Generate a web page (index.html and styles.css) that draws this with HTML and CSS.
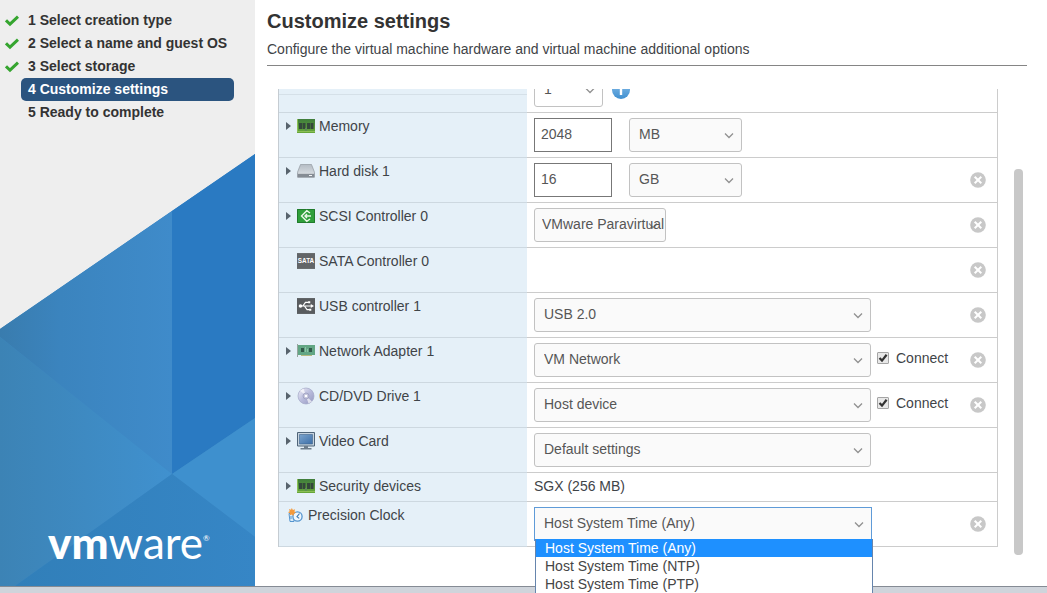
FILE: index.html
```html
<!DOCTYPE html>
<html lang="en">
<head>
<meta charset="utf-8">
<title>New virtual machine - Customize settings</title>
<link rel="stylesheet" href="styles.css">
</head>
<body>
<svg class="defs" width="0" height="0" aria-hidden="true">
  <defs>
    <linearGradient id="art-a"><stop offset="0" stop-color="#397cae"/><stop offset=".35" stop-color="#3b84be"/><stop offset="1" stop-color="#3f8bca"/></linearGradient>
    <linearGradient id="art-b"><stop offset="0" stop-color="#3c83b5"/><stop offset="1" stop-color="#4091cf"/></linearGradient>
    <linearGradient id="art-c"><stop offset="0" stop-color="#317fb9"/><stop offset="1" stop-color="#3686c6"/></linearGradient>
    <linearGradient id="ram-g" x2="0" y2="1"><stop offset="0" stop-color="#3f7d3c"/><stop offset="1" stop-color="#68a83a"/></linearGradient>
    <linearGradient id="disk-g" x2="0" y2="1"><stop offset="0" stop-color="#b4bcc4"/><stop offset="1" stop-color="#e2e6ea"/></linearGradient>
    <linearGradient id="info-g" x2="0" y2="1"><stop offset="0" stop-color="#8cc0ea"/><stop offset="1" stop-color="#3f8fd0"/></linearGradient>
    <linearGradient id="cd-g" x2="1" y2="1"><stop offset="0" stop-color="#f0f1f8"/><stop offset=".5" stop-color="#b9bbdc"/><stop offset="1" stop-color="#9296bd"/></linearGradient>
    <linearGradient id="screen-g" x2="1" y2="1"><stop offset="0" stop-color="#7ba4cd"/><stop offset="1" stop-color="#3c6ea8"/></linearGradient>
    <symbol id="check" viewBox="0 0 14 12"><path d="M1 5.300 5 9.200 13 1.600" fill="none" stroke="#35a52f" stroke-width="3"/></symbol>
    <symbol id="ram" viewBox="0 0 18 14"><path fill="url(#ram-g)" d="M0 0h18v14H0z"/><path fill="#8bbf55" d="M0 12h18v1H0zM0 0h1v13H0z"/><path fill="#33483a" d="M2 4h3v6H2zM5.500 4h3v6h-3zM10 4h3v6h-3zM13.500 4h3v6h-3z"/><path fill="#5c8a55" d="M8 9h2v3H8z"/></symbol>
    <symbol id="disk" viewBox="0 0 18 14"><path fill="url(#disk-g)" stroke="#9299a1" stroke-width=".7" d="M3.5.5h11L17.4 8v5.3H.6V8z"/><path fill="#858c94" d="M.6 9.300h16.800v4H.6z"/><path stroke="#c7ccd1" d="M1 9.500h16"/><path stroke="#f4f6f7" d="M12 11.500h3"/></symbol>
    <symbol id="scsi" viewBox="0 0 18 14"><path fill="#2f9f3b" d="M0 0h18v14H0z"/><path fill="none" stroke="#207a2c" d="M.5.5h17v13H.5z"/><path fill="none" stroke="#e9f7e7" stroke-width="1.4" d="M13 4 9.8 1.7 4.5 7l5.3 5.3L13 10M14 7H8M10 5 8 7l2 2"/></symbol>
    <symbol id="sata" viewBox="0 0 17 15"><path fill="#626568" d="M0 0h17v15H0z"/><text x="8.5" y="9.7" text-anchor="middle" font-family="Liberation Sans, sans-serif" font-size="6" font-weight="bold" fill="#fff">SATA</text></symbol>
    <symbol id="usb" viewBox="0 0 17 15"><path fill="#595c5f" d="M0 0h17v15H0z"/><path fill="none" stroke="#fff" stroke-width="1.1" d="M3 7.5h11M5.5 7.5 8 4h3M7 7.5l2.5 3.5H12"/><circle cx="3.3" cy="7.5" r="1.7" fill="#fff"/><path fill="#fff" d="m13 5.5 3 2-3 2zM10.5 3h2v2h-2zM11.5 10h2v2h-2z"/></symbol>
    <symbol id="nic" viewBox="0 0 18 14"><path fill="#62a684" d="M1 1h17v10H1z"/><path stroke="#98a59f" d="M.5 0v13"/><path fill="#31594a" d="M4 4h3v4H4zM12 4h3v4h-3z"/><path stroke="#8dc4a8" d="M8.5 3v5M10.500 5v3"/><path fill="#b6ba7e" d="M4 11h11v1H4z"/></symbol>
    <symbol id="cd" viewBox="0 0 18 18"><circle cx="9" cy="9" r="8" fill="url(#cd-g)" stroke="#a4a7c7" stroke-width=".7"/><path fill="#fff" opacity=".65" d="M9 9 3 3.500 6.500 1.500zM9 9l6 5.500-3.500 2z"/><circle cx="9" cy="9" r="3" fill="#c3c3dc" stroke="#8f92b3" stroke-width=".6"/><circle cx="9" cy="9" r="1.300" fill="#fff"/></symbol>
    <symbol id="screen" viewBox="0 0 18 18"><path fill="#c6d3df" stroke="#4f6478" d="M.5.5h17v13.500H.5z"/><path fill="url(#screen-g)" stroke="#41658b" stroke-width=".6" d="M2.500 2.500h13v9.500h-13z"/><path fill="#6c7c8b" d="M7 14h4v2H7zM3.500 16h11v1.500h-11z"/></symbol>
    <symbol id="clock" viewBox="0 0 15 15"><path fill="#d8eaf8" stroke="#5595cf" d="M1 5.500h5v8H2zM3 8v3"/><circle cx="9.500" cy="8.500" r="4.600" fill="#eff7fd" stroke="#5595cf" stroke-width="1.300"/><path fill="none" stroke="#3f7db9" stroke-width="1.200" d="M11.500 5.500 9 8.700l2.200 1.700"/><path fill="#f49a3c" d="m3.800 0 1.100 2 2.200-.7-.7 2.200 1.700 1.100-2 .9L5.300 8 3.800 6.500 1.800 7.300l.2-2-2-1 1.700-1.100L1 1.100l2 .6z"/></symbol>
    <symbol id="info" viewBox="0 0 18 18"><circle cx="9" cy="9" r="9" fill="url(#info-g)"/><path fill="#fff" d="M7.800 7.500h2.400V14H7.800zM7.800 4h2.400v2.200H7.800z"/></symbol>
    <symbol id="remove" viewBox="0 0 16 16"><circle cx="8" cy="8" r="7.800" fill="#c8c8c8"/><path stroke="#fff" stroke-width="2" d="m4.700 4.700 6.600 6.600M11.300 4.700l-6.600 6.600"/></symbol>
  </defs>
</svg>
<div class="wizard">
  <aside class="sidebar">
    <ol class="steps">
      <li><svg class="tick"><use href="#check"/></svg><span class="step">1 Select creation type</span></li>
      <li><svg class="tick"><use href="#check"/></svg><span class="step">2 Select a name and guest OS</span></li>
      <li><svg class="tick"><use href="#check"/></svg><span class="step">3 Select storage</span></li>
      <li><span class="step current" aria-current="step">4 Customize settings</span></li>
      <li><span class="step">5 Ready to complete</span></li>
    </ol>
    <div class="brand">
      <svg class="art" viewBox="0 0 255 432" preserveAspectRatio="none" aria-hidden="true">
        <path fill="#3b86c3" d="M0 175 255 0v432H0z"/>
        <path fill="url(#art-a)" d="M0 175 172 57v263L0 183z"/>
        <path fill="#2a7ac2" d="M172 57 255 0v264l-83 56z"/>
        <path fill="url(#art-b)" d="M0 183 172 320 15 432H0z"/>
        <path fill="#3e90ce" d="m172 320 83-56v119z"/>
        <path fill="url(#art-c)" d="m172 320 83 63v49H15z"/>
      </svg>
      <div class="logo"><b>vm</b>ware<sup>®</sup></div>
    </div>
  </aside>
  <main class="main">
    <header class="head">
      <h1>Customize settings</h1>
      <p>Configure the virtual machine hardware and virtual machine additional options</p>
    </header>
    <div class="scroller">
      <table class="hardware">
        <tbody>
          <tr class="cpu"><th scope="row"></th><td><div class="controls"><select class="tiny" aria-label="CPU"><option>1</option></select><svg class="info"><use href="#info"/></svg></div></td><td class="end"></td></tr>
          <tr><th scope="row"><div class="name"><i class="arrow"></i><svg class="icon"><use href="#ram"/></svg><label for="memory">Memory</label></div></th><td><div class="controls wide"><input class="number" id="memory" type="text" value="2048"><select class="unit" aria-label="Memory unit"><option>MB</option></select></div></td><td class="end"></td></tr>
          <tr><th scope="row"><div class="name"><i class="arrow"></i><svg class="icon"><use href="#disk"/></svg><label for="disk-size">Hard disk 1</label></div></th><td><div class="controls wide"><input class="number" id="disk-size" type="text" value="16"><select class="unit" aria-label="Disk unit"><option>GB</option></select></div></td><td class="end"><button class="remove" aria-label="Remove hard disk"><svg><use href="#remove"/></svg></button></td></tr>
          <tr><th scope="row"><div class="name"><i class="arrow"></i><svg class="icon"><use href="#scsi"/></svg><label for="scsi-type">SCSI Controller 0</label></div></th><td><div class="controls"><select class="type" id="scsi-type"><option>VMware Paravirtual</option></select></div></td><td class="end"><button class="remove" aria-label="Remove SCSI controller"><svg><use href="#remove"/></svg></button></td></tr>
          <tr><th scope="row"><div class="name"><i class="arrow none"></i><svg class="icon"><use href="#sata"/></svg>SATA Controller 0</div></th><td></td><td class="end"><button class="remove" aria-label="Remove SATA controller"><svg><use href="#remove"/></svg></button></td></tr>
          <tr><th scope="row"><div class="name"><i class="arrow none"></i><svg class="icon"><use href="#usb"/></svg><label for="usb-type">USB controller 1</label></div></th><td><div class="controls"><select id="usb-type"><option>USB 2.0</option></select></div></td><td class="end"><button class="remove" aria-label="Remove USB controller"><svg><use href="#remove"/></svg></button></td></tr>
          <tr><th scope="row"><div class="name"><i class="arrow"></i><svg class="icon"><use href="#nic"/></svg><label for="network">Network Adapter 1</label></div></th><td><div class="controls"><select id="network"><option>VM Network</option></select><label class="connect"><input type="checkbox" checked>Connect</label></div></td><td class="end"><button class="remove" aria-label="Remove network adapter"><svg><use href="#remove"/></svg></button></td></tr>
          <tr><th scope="row"><div class="name"><i class="arrow"></i><svg class="icon"><use href="#cd"/></svg><label for="drive">CD/DVD Drive 1</label></div></th><td><div class="controls"><select id="drive"><option>Host device</option></select><label class="connect"><input type="checkbox" checked>Connect</label></div></td><td class="end"><button class="remove" aria-label="Remove CD/DVD drive"><svg><use href="#remove"/></svg></button></td></tr>
          <tr><th scope="row"><div class="name"><i class="arrow"></i><svg class="icon"><use href="#screen"/></svg><label for="video">Video Card</label></div></th><td><div class="controls"><select id="video"><option>Default settings</option></select></div></td><td class="end"></td></tr>
          <tr class="short"><th scope="row"><div class="name"><i class="arrow"></i><svg class="icon"><use href="#ram"/></svg>Security devices</div></th><td>SGX (256 MB)</td><td class="end"></td></tr>
          <tr><th scope="row"><div class="name clock"><svg class="icon"><use href="#clock"/></svg><label for="precision">Precision Clock</label></div></th><td><div class="controls open"><select id="precision"><option>Host System Time (Any)</option></select>
            <ul class="menu" role="listbox"><li class="active" role="option">Host System Time (Any)</li><li role="option">Host System Time (NTP)</li><li role="option">Host System Time (PTP)</li></ul></div></td><td class="end"><button class="remove" aria-label="Remove precision clock"><svg><use href="#remove"/></svg></button></td></tr>
        </tbody>
      </table>
      <div class="track"><div class="thumb"></div></div>
    </div>
  </main>
</div>
</body>
</html>
```
FILE: styles.css
```css
* { box-sizing: border-box; }
body {
  margin: 0;
  font-family: "Liberation Sans", Arial, sans-serif;
  font-size: 14px;
  line-height: 18px;
  color: #3f4448;
  background: #cfd4db;
}
.defs { position: absolute; }
.wizard {
  display: grid;
  grid-template-columns: 255px 1fr;
  height: 100vh;
  overflow: hidden;
  padding-bottom: 7px;
}

/* Sidebar */
.sidebar {
  display: flex;
  flex-direction: column;
  justify-content: space-between;
  background: #eee;
  border-bottom: 1px solid #858b94;
  margin-bottom: -1px;
}
.steps {
  list-style: none;
  margin: 0;
  padding: 9px 21px 0 5px;
  font-weight: bold;
  color: #333;
}
.steps li { display: flex; align-items: center; height: 23px; }
.tick { width: 14px; height: 12px; margin-right: 2px; }
.step { flex: 1; line-height: 23px; padding-left: 7px; white-space: nowrap; }
.steps li > .step:first-child { margin-left: 16px; }
.current { background: #2b547f; color: #fff; border-radius: 5px; }
.brand { position: relative; }
.art { display: block; width: 100%; height: 432px; }
.logo {
  position: absolute;
  left: 48px;
  bottom: 18px;
  font: 400 44px/52px Lato, sans-serif;
  color: #fff;
  white-space: nowrap;
}
.logo b { font-weight: 900; }
.logo sup { font-size: 8px; line-height: 8px; vertical-align: 18px; }

/* Main pane */
.main {
  background: #fff;
  padding: 8px 20px 0 12px;
  border-bottom: 1px solid #858b94;
  margin-bottom: -1px;
}
.head { border-bottom: 1px solid #858585; height: 58px; }
h1 { margin: 0; font-size: 20px; line-height: 26px; color: #333; }
p { margin: 6px 0 0; }
.scroller {
  display: flex;
  align-items: flex-start;
  gap: 16px;
  margin-top: 23px;
  padding: 0 4px 0 11px;
  position: relative;
  z-index: 1;
  clip-path: inset(0 0 -60px 0);
}
.hardware {
  flex: 1;
  table-layout: fixed;
  border-spacing: 0;
  margin-top: -21px;
  border-left: 1px solid #c5ccd2;
  border-right: 1px solid #ccc;
}
th, td {
  height: 45px;
  padding: 5px 7px;
  border-bottom: 1px solid #ccc;
  text-align: left;
  font-weight: normal;
  vertical-align: top;
}
th {
  width: 248px;
  padding-top: 4px;
  background: #e5f0f8;
  border-bottom-color: #cdd8e0;
}
.cpu th { background: linear-gradient(#d5e0e8, #d5e0e8) 0 26px / 100% 1px no-repeat #e5f0f8; }
.short th, .short td { height: 29px; padding-top: 4px; }
.end { width: 40px; padding: 0 0 0 13px; vertical-align: middle; }
.name { display: flex; align-items: center; height: 18px; }
.arrow {
  width: 5px;
  border: solid transparent;
  border-width: 4px 0 4px 5px;
  border-left-color: #58636d;
  margin-right: 6px;
}
.arrow.none { visibility: hidden; }
.icon { flex: none; width: 18px; height: 18px; margin-right: 4px; }
.clock { padding-left: 2px; }
.clock .icon { width: 15px; height: 15px; margin-right: 5px; }
.controls { display: flex; gap: 6px; position: relative; }
.wide { gap: 17px; }
.number {
  width: 78px;
  height: 34px;
  padding: 0 6px 2px;
  border: 1px solid #777;
  background: #fff;
  font: inherit;
  color: #565656;
}
select {
  appearance: none;
  width: 337px;
  height: 34px;
  padding: 0 24px 2px 9px;
  border: 1px solid #c2c2c2;
  border-radius: 3px;
  font: inherit;
  color: #565656;
  background: #fafafa url("data:image/svg+xml,%3Csvg xmlns='http://www.w3.org/2000/svg' width='10' height='7'%3E%3Cpath d='M1 1.500 5 5.500 9 1.500' fill='none' stroke='%23909090' stroke-width='1.300'/%3E%3C/svg%3E") no-repeat right 7px center;
}
.tiny { width: 69px; background-color: #fff; }
.unit { width: 113px; }
.type { width: 132px; padding-left: 7px; padding-right: 0; }
.info { width: 18px; height: 18px; margin: 8px 0 0 3px; }
.connect { display: flex; align-items: center; gap: 7px; height: 30px; }
.connect input {
  appearance: none;
  width: 12px;
  height: 12px;
  margin: 0;
  border: 1px solid #a5a5a5;
  border-radius: 1px;
  background: url("data:image/svg+xml,%3Csvg xmlns='http://www.w3.org/2000/svg' viewBox='0 0 10 10'%3E%3Cpath d='M1.500 5 4 7.600 8.600 1.800' fill='none' stroke='%23333' stroke-width='2.200'/%3E%3C/svg%3E") #e8e8e8;
}
.open select { width: 338px; border: 1px solid #5f9bd8; border-radius: 0; }
.menu {
  position: absolute;
  top: 32px;
  left: 1px;
  width: 338px;
  margin: 0;
  padding: 0;
  list-style: none;
  background: #fff;
  border: 1px solid #6685ad;
  border-top: 0;
  color: #454545;
}
.menu li { padding-left: 9px; }
.menu .active { background: #1e90ff; color: #fff; }
.remove { display: block; width: 16px; height: 16px; padding: 0; border: 0; background: none; }
.remove svg { display: block; width: 16px; height: 16px; }
.track { width: 9px; padding-top: 80px; }
.thumb { height: 386px; border-radius: 4px; background: #c8c8c8; }
```
